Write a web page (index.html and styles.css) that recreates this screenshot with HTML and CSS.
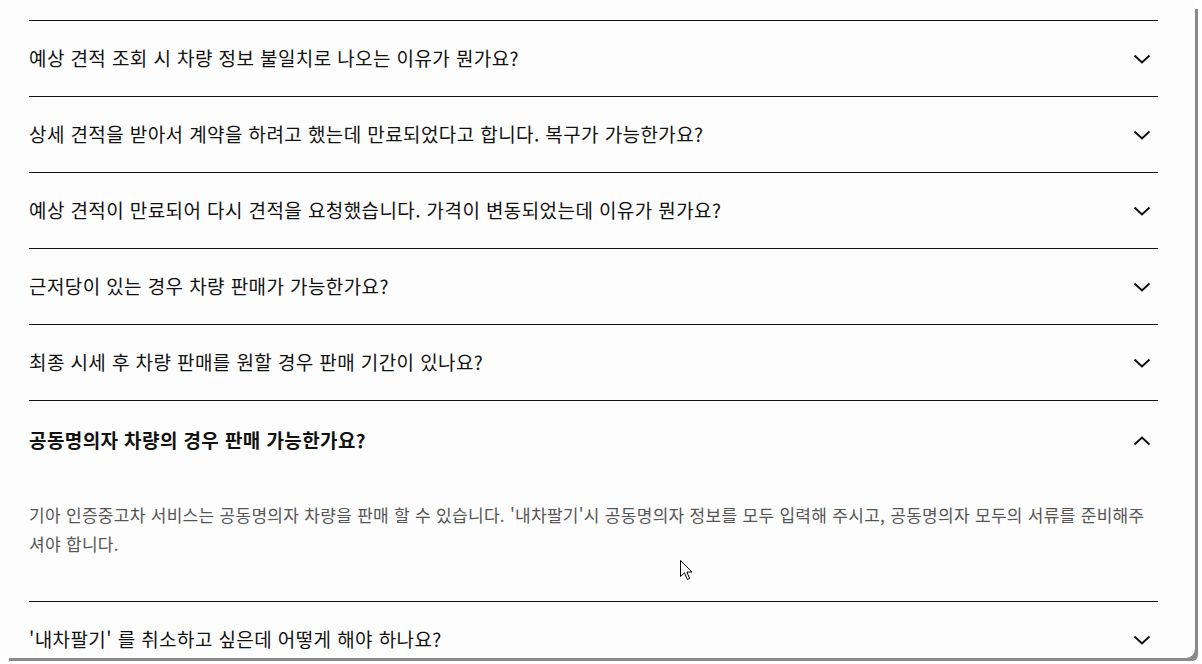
FILE: index.html
```html
<!DOCTYPE html>
<html lang="ko">
<head>
<meta charset="utf-8">
<link rel="stylesheet" href="styles.css">
</head>
<body>
<div class="panel">
  <ul class="faq">
    <li class="item">
      <div class="q"><span>예상 견적 조회 시 차량 정보 불일치로 나오는 이유가 뭔가요?</span>
        <svg class="chev" viewBox="0 0 18 10"><path d="M1.5 1.5 L9 8.5 L16.5 1.5"/></svg></div>
    </li>
    <li class="item">
      <div class="q"><span>상세 견적을 받아서 계약을 하려고 했는데 만료되었다고 합니다. 복구가 가능한가요?</span>
        <svg class="chev" viewBox="0 0 18 10"><path d="M1.5 1.5 L9 8.5 L16.5 1.5"/></svg></div>
    </li>
    <li class="item">
      <div class="q"><span>예상 견적이 만료되어 다시 견적을 요청했습니다. 가격이 변동되었는데 이유가 뭔가요?</span>
        <svg class="chev" viewBox="0 0 18 10"><path d="M1.5 1.5 L9 8.5 L16.5 1.5"/></svg></div>
    </li>
    <li class="item">
      <div class="q"><span>근저당이 있는 경우 차량 판매가 가능한가요?</span>
        <svg class="chev" viewBox="0 0 18 10"><path d="M1.5 1.5 L9 8.5 L16.5 1.5"/></svg></div>
    </li>
    <li class="item">
      <div class="q"><span>최종 시세 후 차량 판매를 원할 경우 판매 기간이 있나요?</span>
        <svg class="chev" viewBox="0 0 18 10"><path d="M1.5 1.5 L9 8.5 L16.5 1.5"/></svg></div>
    </li>
    <li class="item open">
      <div class="q"><span>공동명의자 차량의 경우 판매 가능한가요?</span>
        <svg class="chev" viewBox="0 0 18 10"><path d="M1.5 8.5 L9 1.5 L16.5 8.5"/></svg></div>
      <p class="a">기아 인증중고차 서비스는 공동명의자 차량을 판매 할 수 있습니다. '내차팔기'시 공동명의자 정보를 모두 입력해 주시고, 공동명의자 모두의 서류를 준비해주셔야 합니다.</p>
    </li>
    <li class="item">
      <div class="q"><span>'내차팔기' 를 취소하고 싶은데 어떻게 해야 하나요?</span>
        <svg class="chev" viewBox="0 0 18 10"><path d="M1.5 1.5 L9 8.5 L16.5 1.5"/></svg></div>
    </li>
  </ul>
  <svg class="cursor" viewBox="0 0 13 21" width="13" height="21"><path d="M0.5 0.5 L0.5 16.5 L4.5 12.8 L7.3 19.5 L9.6 18.5 L6.9 12 L12 12 Z" fill="#fff" stroke="#000" stroke-width="1"/></svg>
</div>
</body>
</html>
```
FILE: styles.css
```css
html, body {
  margin: 0;
  padding: 0;
  background: #ffffff;
}
body {
  width: 1202px;
  height: 664px;
  overflow: hidden;
  font-family: "Noto Sans CJK KR", "Noto Sans", sans-serif;
}
.panel {
  position: relative;
  width: 1195px;
  height: 658px;
  background: #fdfdfd;
  border-radius: 0 0 9px 0;
  box-shadow: 6px 6px 0 -3px #8a8a8a;
  overflow: hidden;
  box-sizing: border-box;
  padding: 20px 0 0 29px;
}
.faq {
  list-style: none;
  margin: 0;
  padding: 0;
  width: 1129px;
}
.item {
  border-top: 1px solid #111;
}
.q {
  height: 75px;
  display: flex;
  align-items: center;
  justify-content: space-between;
  font-size: 19px;
  letter-spacing: 0.4px;
  color: #111;
}
.q span {
  margin-top: -2px;
}
.open .q {
  font-weight: 700;
  height: 79px;
}
.chev {
  width: 18px;
  height: 10px;
  margin-right: 7px;
  fill: none;
  stroke: #111;
  stroke-width: 2;
}
.a {
  margin: 0;
  padding: 20px 0 43px;
  font-size: 17px;
  letter-spacing: 0.3px;
  line-height: 29px;
  color: #555;
}
.cursor {
  position: absolute;
  left: 680px;
  top: 560px;
}
```
